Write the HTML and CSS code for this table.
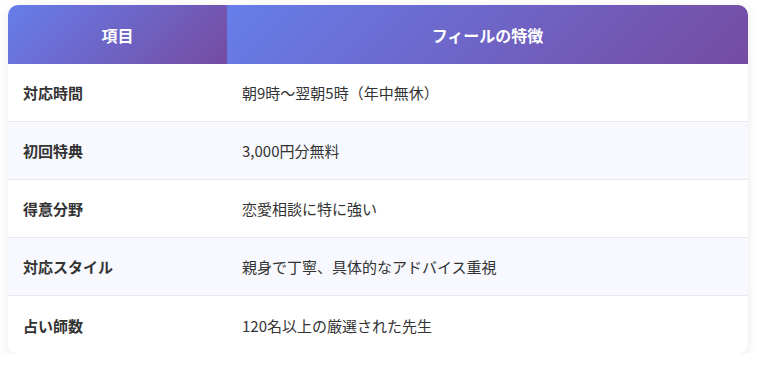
FILE: index.html
```html
<!DOCTYPE html>
<html lang="ja">
<head>
<meta charset="utf-8">
<link rel="stylesheet" href="styles.css">
</head>
<body>
<table class="cmp">
  <thead>
    <tr><th class="c1">項目</th><th>フィールの特徴</th></tr>
  </thead>
  <tbody>
    <tr><td class="k">対応時間</td><td>朝9時～翌朝5時（年中無休）</td></tr>
    <tr><td class="k">初回特典</td><td>3,000円分無料</td></tr>
    <tr><td class="k">得意分野</td><td>恋愛相談に特に強い</td></tr>
    <tr><td class="k">対応スタイル</td><td>親身で丁寧、具体的なアドバイス重視</td></tr>
    <tr><td class="k">占い師数</td><td>120名以上の厳選された先生</td></tr>
  </tbody>
</table>
</body>
</html>
```
FILE: styles.css
```css
html, body { margin: 0; padding: 0; background: #fff; }
body { padding: 5px 12px 0 8px; font-family: "Noto Sans CJK JP", "Noto Sans", sans-serif; color: #333; }
.cmp {
  width: 740px;
  border-collapse: separate;
  border-spacing: 0;
  border-radius: 10px;
  overflow: hidden;
  box-shadow: 0 3px 12px rgba(0,0,0,0.09);
  font-size: 15px;
}
.cmp th {
  height: 59px;
  padding: 0 15px;
  background: linear-gradient(135deg, #667eea 0%, #764ba2 100%);
  color: #fff;
  font-weight: 700;
  font-size: 16px;
  text-align: center;
}
.cmp th.c1 { width: 189px; }
.cmp td {
  height: 57px;
  padding: 0 15px;
  border-bottom: 1px solid #e9e9ee;
  text-align: left;
  vertical-align: middle;
}
.cmp tbody tr:nth-child(even) td { background: #f8f9fe; }
.cmp tbody tr:last-child td { border-bottom: none; height: 58px; }
.cmp td.k { font-weight: 700; }
```
